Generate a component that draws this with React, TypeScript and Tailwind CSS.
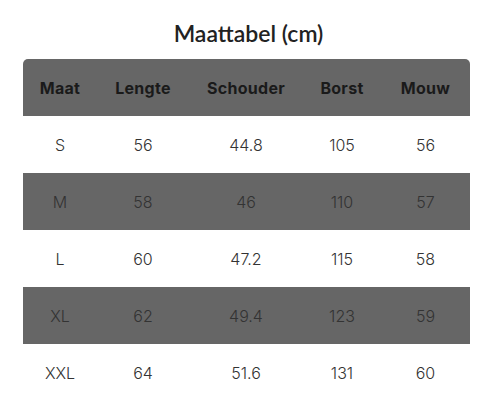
const rows = [
  ["S", "56", "44.8", "105", "56"],
  ["M", "58", "46", "110", "57"],
  ["L", "60", "47.2", "115", "58"],
  ["XL", "62", "49.4", "123", "59"],
  ["XXL", "64", "51.6", "131", "60"],
];

const headers = ["Maat", "Lengte", "Schouder", "Borst", "Mouw"];

const cols = "grid grid-cols-[74px_92px_114px_78px_89px]";

export default function App() {
  return (
    <div className="w-[497px] h-[413px] bg-white pt-[18px]">
      <h1 className="text-center text-[23px] leading-[30px] font-semibold text-[#222] font-['Lato',sans-serif]">
        Maattabel (cm)
      </h1>
      <div className="mx-[23px] mt-[11px] w-[447px] font-['Inter',sans-serif]">
        <div className={`${cols} h-[57px] items-center bg-[#666] rounded-t-[5px] text-[16px] tracking-[0.3px] font-bold text-[#1a1a1a]`}>
          {headers.map((h) => (
            <div key={h} className="text-center">
              {h}
            </div>
          ))}
        </div>
        {rows.map((r, i) => (
          <div
            key={r[0]}
            className={`${cols} h-[57px] items-center text-[16px] font-light text-[#333] ${
              i % 2 === 1 ? "bg-[#666]" : "bg-white"
            }`}
          >
            {r.map((c, j) => (
              <div key={j} className="text-center">
                {c}
              </div>
            ))}
          </div>
        ))}
      </div>
    </div>
  );
}
